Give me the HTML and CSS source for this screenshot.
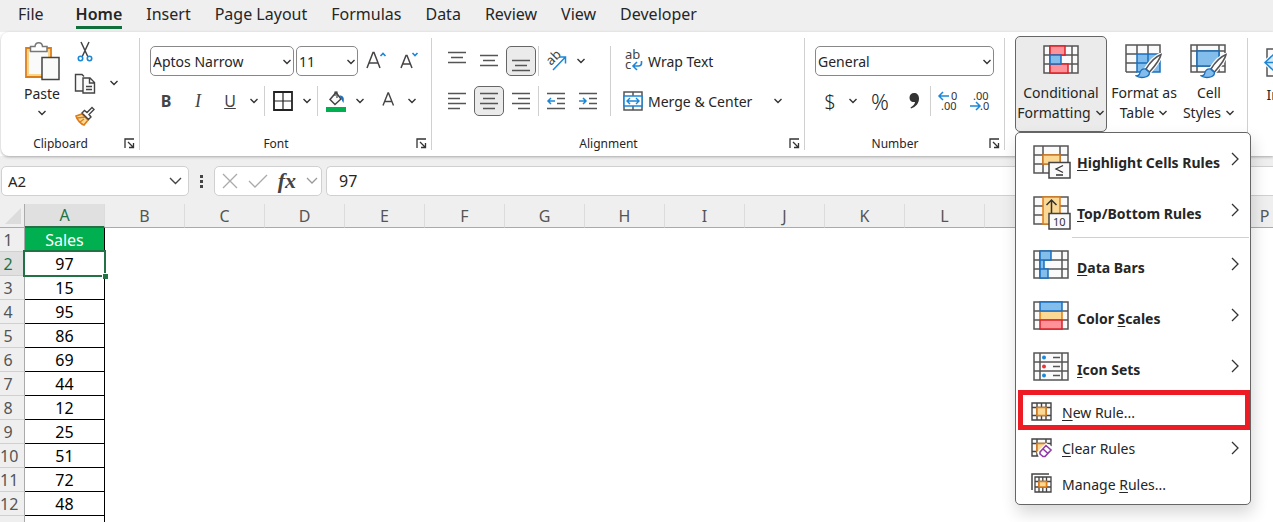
FILE: index.html
```html
<!DOCTYPE html>
<html lang="en">
<head>
  <meta charset="UTF-8">
  <meta name="viewport" content="width=device-width, initial-scale=1.0">
  <title>Sales - Excel</title>
  <link rel="stylesheet" href="styles.css">
</head>
<body>
  <svg class="sprite" aria-hidden="true">
    <symbol id="chevron" viewBox="0 0 10 6"><path d="M1.5 1L5 4.5 8.5 1" fill="none" stroke="#333" stroke-width="1.4"/></symbol>
    <symbol id="arrow" viewBox="0 0 8 14"><path d="M1 1l6 6-6 6" fill="none" stroke="#333" stroke-width="1.3"/></symbol>
    <symbol id="launcher" viewBox="0 0 11 11"><path d="M1 10V1h9M4 4l5 5M9.5 5v4.5H5" fill="none" stroke="#333" stroke-width="1.3"/></symbol>
    <symbol id="brush" viewBox="0 0 28 26">
      <path d="M26 1.5C20 4 14 11 11 16l3.5 3C19 14 25 7 26 1.5z" fill="#fff" stroke="#fff" stroke-width="4"/>
      <path d="M26 1.5C20 4 14 11 11 16l3.5 3C19 14 25 7 26 1.5z" fill="#fff" stroke="#555" stroke-width="1.5"/>
      <path d="M10.5 16c-5-.5-5.5 3-6 5-.4 1.3-2 1.8-3.5 1.8 3 2.4 13.5 2.8 13.5-3.3z" fill="#83bdec" stroke="#1a6fbd" stroke-width="1.3"/>
    </symbol>
  </svg>

  <nav class="tabs">
    <a href="#" class="tab file">File</a>
    <a href="#" class="tab active">Home</a>
    <a href="#" class="tab">Insert</a>
    <a href="#" class="tab">Page Layout</a>
    <a href="#" class="tab">Formulas</a>
    <a href="#" class="tab">Data</a>
    <a href="#" class="tab">Review</a>
    <a href="#" class="tab">View</a>
    <a href="#" class="tab">Developer</a>
  </nav>

  <section class="ribbon">
    <div class="group clipboard">
      <div class="clipboard-body">
        <button class="paste">
          <svg width="36" height="40" viewBox="0 0 36 40">
            <path d="M2 6h25v29H2z" fill="#fff" stroke="#e07c16" stroke-width="1.8"/>
            <path d="M4 8h21v25H4z" fill="#fafafa" stroke="#f9d68b" stroke-width="2"/>
            <path d="M6.5 9.5V4.5H11c.5-5 7-5 7.5 0H23v5z" fill="#fff" stroke="#777" stroke-width="1.5"/>
            <path d="M18 15.5h17v22H18z" fill="#fafafa" stroke="#444" stroke-width="1.5"/>
          </svg>
          <span>Paste</span>
          <svg class="chev"><use href="#chevron"/></svg>
        </button>
        <div class="clip-tools">
          <button aria-label="Cut">
            <svg width="20" height="22" viewBox="0 0 20 22" fill="none">
              <path d="M6 1l7 15M14 1L7 16" stroke="#444" stroke-width="1.5"/>
              <circle cx="5.5" cy="17.5" r="2.2" stroke="#1c87d6" stroke-width="1.6"/>
              <circle cx="14.5" cy="17.5" r="2.2" stroke="#1c87d6" stroke-width="1.6"/>
            </svg>
          </button>
          <button aria-label="Copy">
            <svg width="22" height="22" viewBox="0 0 22 22" fill="#fafafa" stroke="#444" stroke-width="1.4">
              <path d="M9 18H1.5V1.5H8l2 2"/>
              <path d="M9 5h7l4.5 4.5V20H9zM15.5 5v5h5"/>
              <path d="M12 13.5h6M12 16.5h6"/>
            </svg>
          </button>
          <button aria-label="Format Painter">
            <svg width="22" height="22" viewBox="0 0 22 22">
              <path d="M2 11l6-2 6 6-4 5C7 19 3 15 2 11z" fill="#fbdc9a" stroke="#e07c16" stroke-width="1.6"/>
              <path d="M3 13l9-1M6 17l4-3" stroke="#e07c16" stroke-width="1.3"/>
              <path d="M8 8l2.5-2.5 2.5 2 5-5 2 2-5 5 2 2.5-2.5 2.5z" fill="#fff" stroke="#444" stroke-width="1.4"/>
            </svg>
          </button>
        </div>
        <button class="drop" aria-label="Copy options"><svg class="chev"><use href="#chevron"/></svg></button>
      </div>
      <footer><span>Clipboard</span><button class="launch" aria-label="Clipboard settings"><svg><use href="#launcher"/></svg></button></footer>
    </div>

    <div class="group font">
      <div class="row">
        <label class="combo font-name">
          <select aria-label="Font"><option>Aptos Narrow</option></select>
          <svg class="chev"><use href="#chevron"/></svg>
        </label>
        <label class="combo font-size">
          <select aria-label="Font size"><option>11</option></select>
          <svg class="chev"><use href="#chevron"/></svg>
        </label>
        <button class="tool" aria-label="Increase font size">
          <svg width="22" height="20" viewBox="0 0 22 20" fill="none">
            <path d="M2 17L8 1.500h1L15 17M4.5 12h8" stroke="#444" stroke-width="1.5"/>
            <path d="M15.5 5L18 2.5 20.5 5" stroke="#1c87d6" stroke-width="1.6"/>
          </svg>
        </button>
        <button class="tool" aria-label="Decrease font size">
          <svg width="22" height="20" viewBox="0 0 22 20" fill="none">
            <path d="M4 17L9 4.5h1L15 17M6 13h7" stroke="#444" stroke-width="1.5"/>
            <path d="M15.5 2L18 4.5 20.5 2" stroke="#1c87d6" stroke-width="1.6"/>
          </svg>
        </button>
      </div>
      <div class="row">
        <button class="tool"><b>B</b></button>
        <button class="tool"><i>I</i></button>
        <button class="tool"><u>U</u></button>
        <button class="drop" aria-label="Underline options"><svg class="chev"><use href="#chevron"/></svg></button>
        <span class="rule"></span>
        <button class="tool" aria-label="Borders">
          <svg width="20" height="20" viewBox="0 0 20 20" fill="none" stroke="#222">
            <path d="M1 1h18v18H1z" stroke-width="1.8"/><path d="M10 1v18M1 10h18" stroke-width="1.2"/>
          </svg>
        </button>
        <button class="drop" aria-label="Border options"><svg class="chev"><use href="#chevron"/></svg></button>
        <span class="rule"></span>
        <button class="tool" aria-label="Fill color">
          <svg width="20" height="21" viewBox="0 0 20 21">
            <path d="M4 8.5l6-7 5 6.5-6 5.5z" fill="#fafafa" stroke="#444" stroke-width="1.5"/>
            <path d="M9 5V1h2v6" fill="none" stroke="#444" stroke-width="1.2"/>
            <path d="M13.5 4.5c4 0 5 2 4 7.5-1.5-2-2-4-4-7.5z" fill="#1c6fb8"/>
            <path d="M0 16h20v5H0z" fill="#00b050"/>
          </svg>
        </button>
        <button class="drop" aria-label="Fill options"><svg class="chev"><use href="#chevron"/></svg></button>
        <button class="tool font-color" aria-label="Font color">
          <svg width="16" height="20" viewBox="0 0 16 20"><path d="M3 14.5L8 2h.5l5 12.5M4.5 10.5h7.5" fill="none" stroke="#444" stroke-width="1.4"/></svg>
        </button>
        <button class="drop" aria-label="Font color options"><svg class="chev"><use href="#chevron"/></svg></button>
      </div>
      <footer><span>Font</span><button class="launch" aria-label="Font settings"><svg><use href="#launcher"/></svg></button></footer>
    </div>

    <div class="group alignment">
      <div class="alignment-body">
        <div class="align-tools">
          <div class="row spaced">
            <button class="tool" aria-label="Top align"><svg class="lines" viewBox="0 0 18 20"><path d="M0 1.5h18M3 6.5h12M0 11.5h18"/></svg></button>
            <button class="tool" aria-label="Middle align"><svg class="lines" viewBox="0 0 18 20"><path d="M0 4.5h18M3 9.5h12M0 14.5h18"/></svg></button>
            <button class="tool on" aria-label="Bottom align"><svg class="lines" viewBox="0 0 18 20"><path d="M0 9.5h18M3 14.5h12M0 19.5h18"/></svg></button>
            <span class="rule"></span>
            <button class="tool" aria-label="Orientation">
              <svg width="22" height="22" viewBox="0 0 22 22">
                <text x="0" y="0" transform="translate(6 16) rotate(-45)" class="icon-text">ab</text>
                <path d="M8 20L20 7.5M14 7h6.5v6.5" fill="none" stroke="#1c87d6" stroke-width="1.5"/>
              </svg>
            </button>
            <button class="drop" aria-label="Orientation options"><svg class="chev"><use href="#chevron"/></svg></button>
          </div>
          <div class="row spaced">
            <button class="tool" aria-label="Align left"><svg class="lines" viewBox="0 0 18 20"><path d="M0 2.5h18M0 7.5h12M0 12.5h18M0 17.5h12"/></svg></button>
            <button class="tool on" aria-label="Center"><svg class="lines" viewBox="0 0 18 20"><path d="M0 2.5h18M3 7.5h12M0 12.5h18M3 17.5h12"/></svg></button>
            <button class="tool" aria-label="Align right"><svg class="lines" viewBox="0 0 18 20"><path d="M0 2.5h18M6 7.5h12M0 12.5h18M6 17.5h12"/></svg></button>
            <span class="rule"></span>
            <button class="tool" aria-label="Decrease indent"><svg class="lines" viewBox="0 0 18 20"><path d="M0 2.5h18M10 7.5h8M10 12.5h8M0 17.5h18"/><path class="blue" d="M8 10H1M4 7l-3 3 3 3"/></svg></button>
            <button class="tool" aria-label="Increase indent"><svg class="lines" viewBox="0 0 18 20"><path d="M0 2.5h18M10 7.5h8M10 12.5h8M0 17.5h18"/><path class="blue" d="M0 10h7M4 7l3 3-3 3"/></svg></button>
          </div>
        </div>
        <div class="wrap-tools">
          <button class="wide">
            <svg width="20" height="22" viewBox="0 0 20 22">
              <text x="2" y="9" class="icon-text">ab</text>
              <text x="2" y="19" class="icon-text">c</text>
              <path d="M18.5 11v2q0 3-3 3h-5M14 12l-4 4 4 4" fill="none" stroke="#1c87d6" stroke-width="1.6"/>
            </svg>
            <span>Wrap Text</span>
          </button>
          <div class="merge">
            <button class="wide">
              <svg width="20" height="20" viewBox="0 0 20 20" fill="none">
                <path d="M1 1h18v18H1zM10 1v18" fill="#fff" stroke="#555" stroke-width="1.5"/>
                <path d="M1 5h18v10H1z" fill="#fff" stroke="#1c87d6" stroke-width="1.5"/>
                <path d="M4 10h12M7 7l-3 3 3 3M13 7l3 3-3 3" stroke="#1c87d6" stroke-width="1.4"/>
              </svg>
              <span>Merge &amp; Center</span>
            </button>
            <button class="drop" aria-label="Merge options"><svg class="chev"><use href="#chevron"/></svg></button>
          </div>
        </div>
      </div>
      <footer><span>Alignment</span><button class="launch" aria-label="Alignment settings"><svg><use href="#launcher"/></svg></button></footer>
    </div>

    <div class="group number">
      <div class="row">
        <label class="combo number-format">
          <select aria-label="Number format"><option>General</option></select>
          <svg class="chev"><use href="#chevron"/></svg>
        </label>
      </div>
      <div class="row">
        <button class="tool sign">$</button>
        <button class="drop" aria-label="Currency options"><svg class="chev"><use href="#chevron"/></svg></button>
        <button class="tool sign percent">%</button>
        <button class="tool" aria-label="Comma style">
          <svg width="12" height="18" viewBox="0 0 12 18"><path d="M6 1c3 0 5 2 5 5.5C11 11 8 15 3 16.5l-.5-1C5 14 7 12 7 10 3 10.5 1.5 8 1.5 5.5 1.5 3 3.5 1 6 1z" fill="#333"/></svg>
        </button>
        <span class="rule"></span>
        <button class="tool" aria-label="Increase decimal">
          <svg width="22" height="22" viewBox="0 0 22 22">
            <text x="14" y="10" class="icon-digits">0</text><text x="4" y="20" class="icon-digits">.00</text>
            <path d="M12 6H2M6 2L2 6l4 4" fill="none" stroke="#1c87d6" stroke-width="1.5"/>
          </svg>
        </button>
        <button class="tool" aria-label="Decrease decimal">
          <svg width="22" height="22" viewBox="0 0 22 22">
            <text x="4" y="10" class="icon-digits">.00</text><text x="11" y="20" class="icon-digits">.0</text>
            <path d="M1 16h10M7 12l4 4-4 4" fill="none" stroke="#1c87d6" stroke-width="1.5"/>
          </svg>
        </button>
      </div>
      <footer><span>Number</span><button class="launch" aria-label="Number settings"><svg><use href="#launcher"/></svg></button></footer>
    </div>

    <div class="group styles">
      <div class="menu-anchor">
        <button class="big on" aria-expanded="true">
          <svg width="36" height="32" viewBox="0 0 36 32">
            <path d="M1 1h34v27H1zM1 10h34M1 19h34M7 1v27M29 1v27" fill="#fafafa" stroke="#555" stroke-width="1.5"/>
            <path d="M7 1h15v9H7zM7 19h18v9H7z" fill="#ff9298" stroke="#d8232a" stroke-width="1.5"/>
            <path d="M7 10h11v9H7z" fill="#83bdec" stroke="#1a6fbd" stroke-width="1.5"/>
          </svg>
          <span>Conditional</span>
          <span>Formatting <svg class="chev"><use href="#chevron"/></svg></span>
        </button>
        <div class="menu" role="menu">
          <button class="item large" role="menuitem">
            <svg width="38" height="34" viewBox="0 0 38 34">
              <path d="M1 1h34v27H1zM1 10h34M1 19h34M10 1v27M27 1v27" fill="#fafafa" stroke="#555" stroke-width="1.5"/>
              <path d="M10 10h17v9H10z" fill="#fbd894" stroke="#e07c16" stroke-width="1.5"/>
              <path d="M16 17.5h21V33H16z" fill="#fafafa" stroke="#444" stroke-width="1.5"/>
              <path d="M30 20.5l-7 3.5 7 3.5M23 30h7" fill="none" stroke="#333" stroke-width="1.3"/>
            </svg>
            <span><u>H</u>ighlight Cells Rules</span>
            <svg class="more"><use href="#arrow"/></svg>
          </button>
          <button class="item large" role="menuitem">
            <svg width="38" height="34" viewBox="0 0 38 34">
              <path d="M1 1h34v27H1zM1 10h34M1 19h34" fill="#fafafa" stroke="#555" stroke-width="1.5"/>
              <path d="M10 1h17v27H10z" fill="#fbd894" stroke="#e07c16" stroke-width="1.5"/>
              <path d="M18.5 20V4M13.5 9l5-5 5 5" fill="none" stroke="#333" stroke-width="1.5"/>
              <path d="M16 17.5h21V33H16z" fill="#fafafa" stroke="#444" stroke-width="1.5"/>
              <text x="20" y="30" class="icon-digits">10</text>
            </svg>
            <span><u>T</u>op/Bottom Rules</span>
            <svg class="more"><use href="#arrow"/></svg>
          </button>
          <hr>
          <button class="item large" role="menuitem">
            <svg width="38" height="29" viewBox="0 0 38 29">
              <path d="M1 1h34v27H1zM1 10h34M1 19h34M7 1v27M29 1v27" fill="#fafafa" stroke="#555" stroke-width="1.5"/>
              <path d="M7 1h11v9H7zM7 10h4v9H7zM7 19h8v9H7z" fill="#83bdec" stroke="#1a6fbd" stroke-width="1.5"/>
            </svg>
            <span><u>D</u>ata Bars</span>
            <svg class="more"><use href="#arrow"/></svg>
          </button>
          <button class="item large" role="menuitem">
            <svg width="38" height="29" viewBox="0 0 38 29">
              <path d="M1 1h34v27H1zM1 10h34M1 19h34" fill="#fafafa" stroke="#555" stroke-width="1.5"/>
              <path d="M7 10h22v9H7z" fill="#fbd894" stroke="#e07c16" stroke-width="1.5"/>
              <path d="M7 1h22v9H7z" fill="#83bdec" stroke="#1a6fbd" stroke-width="1.5"/>
              <path d="M7 19h22v9H7z" fill="#ff9298" stroke="#d8232a" stroke-width="1.5"/>
            </svg>
            <span>Color <u>S</u>cales</span>
            <svg class="more"><use href="#arrow"/></svg>
          </button>
          <button class="item large" role="menuitem">
            <svg width="38" height="29" viewBox="0 0 38 29">
              <path d="M1 1h34v27H1zM1 10h34M1 19h34M7 1v27M29 1v27" fill="#fafafa" stroke="#555" stroke-width="1.5"/>
              <circle cx="11" cy="5.5" r="2" fill="#1c87d6"/><circle cx="11" cy="14.5" r="2" fill="#ee3135"/><circle cx="11" cy="23.5" r="2" fill="#1c87d6"/>
              <path d="M20 5.5h7M20 14.5h7M20 23.5h7" stroke="#555" stroke-width="1.3"/>
            </svg>
            <span><u>I</u>con Sets</span>
            <svg class="more"><use href="#arrow"/></svg>
          </button>
          <div class="rules">
            <button class="item marked" role="menuitem">
              <svg width="22" height="20" viewBox="0 0 22 20">
                <path d="M1 1h19v17H1zM1 5.5h19M1 13.5h19M6 1v17M15 1v17M10.5 1v17" fill="#fafafa" stroke="#444" stroke-width="1.4"/>
                <path d="M6 5.5h9v8H6z" fill="#fbd894" stroke="#e07c16" stroke-width="1.6"/>
              </svg>
              <span><u>N</u>ew Rule...</span>
            </button>
            <button class="item" role="menuitem">
              <svg width="22" height="20" viewBox="0 0 22 20">
                <path d="M1 1h19v17H1zM1 5.5h19M1 13.5h19M6 1v17M15 1v17" fill="#fafafa" stroke="#444" stroke-width="1.4"/>
                <path d="M6 5.5h9v8H6z" fill="#fbd894" stroke="#e07c16" stroke-width="1.6"/>
                <path d="M6 14l9-9 7 4v11H8z" fill="#fff"/>
                <path d="M9 14l6-6.5 5 4.5-6 6.5h-2L9 16zM12 11l5 4.5" fill="#fff" stroke="#8f3aa7" stroke-width="1.6"/>
              </svg>
              <span><u>C</u>lear Rules</span>
              <svg class="more"><use href="#arrow"/></svg>
            </button>
            <button class="item" role="menuitem">
              <svg width="22" height="20" viewBox="0 0 22 20">
                <path d="M1 16V0h17" fill="none" stroke="#444" stroke-width="1.5"/>
                <path d="M4 3h16v15H4zM4 7.5h16M4 13h16M8 3v15M15.5 3v15M11.8 3v15" fill="#fafafa" stroke="#444" stroke-width="1.3"/>
                <path d="M8 7.5h7.5V13H8z" fill="#fbd894" stroke="#e07c16" stroke-width="1.6"/>
              </svg>
              <span>Manage <u>R</u>ules...</span>
            </button>
          </div>
        </div>
      </div>
      <button class="big">
        <svg width="38" height="36" viewBox="0 0 38 36">
          <path d="M1 2h34v27H1z" fill="#fafafa"/>
          <path d="M12 11h23v18H12z" fill="#83bdec"/>
          <path d="M1 29V2h34v9M1 11h11M1 20h11M12 2v9M23 2v9M1 29h11" fill="none" stroke="#555" stroke-width="1.5"/>
          <path d="M12 29V11h23v18zM12 20h23M23 11v18" fill="none" stroke="#1a6fbd" stroke-width="1.5"/>
          <use href="#brush" x="10" y="10" width="28" height="26"/>
        </svg>
        <span>Format as</span>
        <span>Table <svg class="chev"><use href="#chevron"/></svg></span>
      </button>
      <button class="big cell-styles">
        <svg width="38" height="36" viewBox="0 0 38 36">
          <path d="M1 2h34v27H1zM1 8h34M1 23h34M7 2v27M29 2v27" fill="#fafafa" stroke="#555" stroke-width="1.5"/>
          <path d="M7 8h22v15H7z" fill="#83bdec" stroke="#1a6fbd" stroke-width="1.5"/>
          <use href="#brush" x="10" y="10" width="28" height="26"/>
        </svg>
        <span>Cell</span>
        <span>Styles <svg class="chev"><use href="#chevron"/></svg></span>
      </button>
    </div>

    <div class="group cells">
      <button class="big">
        <svg width="44" height="32" viewBox="0 0 44 32">
          <path d="M3 2h38v27H3zM3 11h38M3 20h38M22 2v27" fill="#fafafa" stroke="#555" stroke-width="1.5"/>
          <path d="M1 15.5L10 7v4h31v9H10v4z" fill="#d5eafa" stroke="#fafafa" stroke-width="4"/>
          <path d="M1 15.5L10 7v4h31v9H10v4zM1 15.5h12" fill="#d5eafa" stroke="#1c87d6" stroke-width="1.5"/>
        </svg>
        <span>Insert</span>
      </button>
    </div>
  </section>

  <section class="formula-bar">
    <div class="name-box">
      <input type="text" value="A2" aria-label="Name box">
      <button aria-label="Names"><svg width="13" height="8" viewBox="0 0 13 8"><path d="M1 1l5.5 5.5L12 1" fill="none" stroke="#444" stroke-width="1.4"/></svg></button>
    </div>
    <span class="dots"><i></i><i></i><i></i></span>
    <div class="fx-box">
      <button aria-label="Cancel"><svg width="16" height="16" viewBox="0 0 16 16"><path d="M1 1l14 14M15 1L1 15" stroke="#aaa" stroke-width="1.3"/></svg></button>
      <button aria-label="Enter"><svg width="20" height="16" viewBox="0 0 20 16"><path d="M1 8l6 6L19 2" fill="none" stroke="#aaa" stroke-width="1.3"/></svg></button>
      <button class="fx">fx</button>
      <button aria-label="Functions"><svg width="12" height="8" viewBox="0 0 12 8"><path d="M1 1l5 5 5-5" fill="none" stroke="#999" stroke-width="1.3"/></svg></button>
    </div>
    <input type="text" class="formula" value="97" aria-label="Formula">
  </section>

  <main>
    <table class="sheet">
      <thead>
        <tr>
          <th class="corner"><svg width="16" height="16" viewBox="0 0 16 16"><path d="M16 0v16H0z" fill="#dcdcdc"/></svg></th>
          <th class="current">A</th><th>B</th><th>C</th><th>D</th><th>E</th><th>F</th><th>G</th><th>H</th>
          <th>I</th><th>J</th><th>K</th><th>L</th><th>M</th><th>N</th><th>O</th><th>P</th>
        </tr>
      </thead>
      <tbody>
        <tr><th>1</th><td class="title">Sales</td></tr>
        <tr><th class="current">2</th><td class="selected">97</td></tr>
        <tr><th>3</th><td>15</td></tr>
        <tr><th>4</th><td>95</td></tr>
        <tr><th>5</th><td>86</td></tr>
        <tr><th>6</th><td>69</td></tr>
        <tr><th>7</th><td>44</td></tr>
        <tr><th>8</th><td>12</td></tr>
        <tr><th>9</th><td>25</td></tr>
        <tr><th>10</th><td>51</td></tr>
        <tr><th>11</th><td>72</td></tr>
        <tr><th>12</th><td>48</td></tr>
        <tr><th></th><td></td></tr>
      </tbody>
    </table>
  </main>
</body>
</html>
```
FILE: styles.css
```css
:root {
  --bg: #efefef;
  --text: #262626;
  --line: #d0d0d0;
  --green: #217346;
  --blue: #1c87d6;
}
*, *::before, *::after { box-sizing: border-box; }
body {
  display: flex;
  flex-direction: column;
  margin: 0;
  height: 100vh;
  overflow: hidden;
  background: #fff;
  color: var(--text);
  font-family: "Noto Sans", "Open Sans", sans-serif;
  font-size: 14px;
}
button, select, input { font: inherit; color: inherit; }
button {
  display: flex;
  align-items: center;
  justify-content: center;
  flex: none;
  padding: 0;
  border: none;
  background: none;
  white-space: nowrap;
}
svg { flex: none; display: block; overflow: visible; }
.sprite { position: absolute; width: 0; height: 0; }
.chev { width: 10px; height: 6px; }
.icon-text { font-size: 13px; fill: #444; }
.icon-digits { font-size: 11px; font-weight: 400; fill: #333; }

/* tabs */
.tabs {
  display: flex;
  flex: none;
  gap: 24px;
  height: 32px;
  padding-left: 18px;
  background: var(--bg);
  font-size: 16px;
}
.tab {
  height: 29px;
  line-height: 28px;
  color: var(--text);
  text-decoration: none;
  white-space: nowrap;
}
.tab.file { margin-right: 8px; }
.tab.active { font-weight: 600; border-bottom: 3px solid #0f703b; }

/* ribbon */
.ribbon {
  position: relative;
  z-index: 2;
  display: flex;
  flex: none;
  height: 124px;
  padding-left: 1px;
  margin-left: 1px;
  background: #fff;
  border-radius: 8px 0 0 8px;
  box-shadow: 0 1px 3px rgba(0, 0, 0, 0.3);
}
.group {
  display: flex;
  flex-direction: column;
  flex: none;
  gap: 10px;
  margin: 6px 0;
  padding: 8px 10px 0;
  border-right: 1px solid var(--line);
}
.group footer {
  display: flex;
  align-items: center;
  height: 14px;
  margin-top: auto;
  margin-right: -6px;
  font-size: 12px;
}
.group footer span { flex: 1; padding-right: 14px; text-align: center; }
.launch svg { width: 11px; height: 11px; }
.row { display: flex; align-items: center; height: 30px; }
.spaced { gap: 2px; }
.tool { width: 30px; height: 30px; border-radius: 5px; }
.drop { width: 16px; height: 30px; }
.rule { flex: none; width: 1px; height: 30px; background: var(--line); }
.on { background: #ebebeb; border: 1px solid #666; }
.lines { width: 18px; height: 20px; fill: none; stroke: #555; stroke-width: 1.5; }
.lines .blue { stroke: var(--blue); }

.combo { position: relative; display: block; flex: none; height: 30px; }
.combo select {
  appearance: none;
  width: 100%;
  height: 100%;
  padding: 0 2px;
  border: 1px solid #888;
  border-radius: 5px;
  background: #fff;
}
.combo .chev { position: absolute; right: 2px; top: 13px; pointer-events: none; }

.clipboard { width: 138px; gap: 0; padding-left: 9px; }
.clipboard-body { display: flex; }
.paste {
  flex-direction: column;
  width: 62px;
  height: 80px;
  justify-content: flex-start;
  margin-top: -4px;
}
.paste span { line-height: 24px; }
.paste .chev { margin-top: 4px; }
.clip-tools { display: flex; flex-direction: column; margin-top: -10px; }
.clip-tools button { width: 24px; height: 32px; }
.clipboard-body .drop { margin: 22px 0 0 9px; }

.font { width: 292px; }
.font-name { width: 144px; margin-right: 2px; }
.font-size { width: 62px; margin-right: 2px; }
.font .tool { width: 32px; }
.font .rule { margin: 0 2px; }
.font .font-color { margin-left: 4px; }
.font b, .font i, .font u { font-size: 16px; color: #444; }
.font i { font-family: "Liberation Serif", serif; font-size: 18px; }

.alignment { width: 373px; }
.alignment-body { display: flex; }
.align-tools { display: flex; flex-direction: column; gap: 10px; width: 169px; border-right: 1px solid var(--line); }
.wrap-tools { display: flex; flex-direction: column; gap: 10px; padding-left: 12px; }
.wide { gap: 5px; height: 30px; }
.merge { display: flex; gap: 18px; }
.wrap-tools .wide { align-self: flex-start; }

.number { width: 200px; }
.number .combo { flex: 1; }
.sign { font-size: 20px; font-weight: 300; }
.percent { width: 38px; font-size: 22px; }
.number .rule { margin: 0 2px 0 1px; }
.number .rule + .tool { margin-right: 2px; }

.styles { width: 243px; flex-direction: row; gap: 0; padding-top: 0; padding-right: 8px; }
.big {
  flex-direction: column;
  justify-content: flex-start;
  width: 74px;
  height: 96px;
  padding-top: 7px;
  border-radius: 5px;
  line-height: 20px;
}
.big > svg { height: 36px; margin-bottom: 4px; }
.big span { display: flex; align-items: center; gap: 4px; }
.styles > * { margin-top: -2px; }
.menu-anchor { position: relative; }
.menu-anchor .big { width: 92px; padding-top: 6px; }
.cell-styles { width: 56px; }
.cells { flex: 1; min-width: 0; border: none; padding-top: 0; overflow: hidden; }
.cells .big { width: 56px; }

/* conditional formatting menu */
.menu {
  position: absolute;
  top: 96px;
  left: 0;
  width: 236px;
  padding-bottom: 2px;
  background: #fff;
  border: 1px solid #666;
  border-radius: 5px;
  box-shadow: 2px 8px 16px rgba(0, 0, 0, 0.16);
}
.item {
  position: relative;
  width: 100%;
  height: 36px;
  padding: 0 11px 0 15px;
  gap: 9px;
}
.item span { flex: 1; text-align: left; }
.item u { text-underline-offset: 2px; }
.large {
  align-items: flex-start;
  height: 51px;
  padding: 12px 11px 0 17px;
  gap: 6px;
  font-weight: 700;
}
.large span { line-height: 36px; }
.more { width: 8px; height: 14px; }
.large .more { margin-top: 7px; }
.menu hr { height: 1px; margin: 2px 1px 0 56px; border: none; background: var(--line); }
.rules { padding-top: 3px; }
.marked::after {
  content: "";
  position: absolute;
  inset: -4px 0 0 2px;
  border: 5px solid #ed1c24;
}

/* formula bar */
.formula-bar {
  display: flex;
  align-items: center;
  flex: none;
  height: 48px;
  padding: 2px 0 0 1px;
  background: var(--bg);
  font-size: 16px;
}
.name-box, .fx-box, .formula {
  display: flex;
  align-items: center;
  height: 30px;
  background: #fff;
  border: 1px solid var(--line);
  border-radius: 5px;
}
.name-box { width: 188px; padding: 0 6px; font-size: 15px; }
.name-box input { flex: 1; min-width: 0; padding: 0; border: none; background: none; }
.dots { display: flex; flex-direction: column; gap: 2px; margin: 0 11px; }
.dots i { width: 3px; height: 3px; background: #444; }
.fx-box { width: 108px; padding: 0 3px 0 7px; justify-content: space-between; }
.fx { font: italic 600 22px "Liberation Serif", serif; color: #444; }
.formula { flex: 1; min-width: 0; margin-left: 4px; padding: 0 12px; border-right: none; border-radius: 5px 0 0 5px; }

/* sheet */
main { flex: 1; min-height: 0; overflow: hidden; }
.sheet {
  width: 1305px;
  table-layout: fixed;
  border-collapse: separate;
  border-spacing: 0;
  font-size: 16px;
}
.sheet th, .sheet td { height: 24px; padding: 0; line-height: 22px; text-align: center; }
.sheet th { background: var(--bg); color: #555; font-weight: 400; }
.sheet thead th { border-right: 1px solid #dcdcdc; border-bottom: 1px solid #aaa; }
.sheet .corner { width: 25px; border-right-color: #aaa; }
.corner svg { margin-left: 5px; }
.sheet tbody th { padding-right: 8px; border-right: 1px solid #aaa; border-bottom: 1px solid var(--line); }
.sheet td { border-right: 1px solid #000; border-bottom: 1px solid #000; color: #000; }
.sheet .current { background: #e0e0e0; color: var(--green); }
.sheet thead .current { border-bottom: 2px solid var(--green); }
.sheet .title { background: #00b050; color: #fff; }
.selected { position: relative; }
.selected::before {
  content: "";
  position: absolute;
  inset: -2px;
  border: 2px solid var(--green);
}
.selected::after {
  content: "";
  position: absolute;
  right: -4px;
  bottom: -4px;
  width: 6px;
  height: 6px;
  background: var(--green);
  border: solid #fff;
  border-width: 1px 0 0 1px;
}
```
